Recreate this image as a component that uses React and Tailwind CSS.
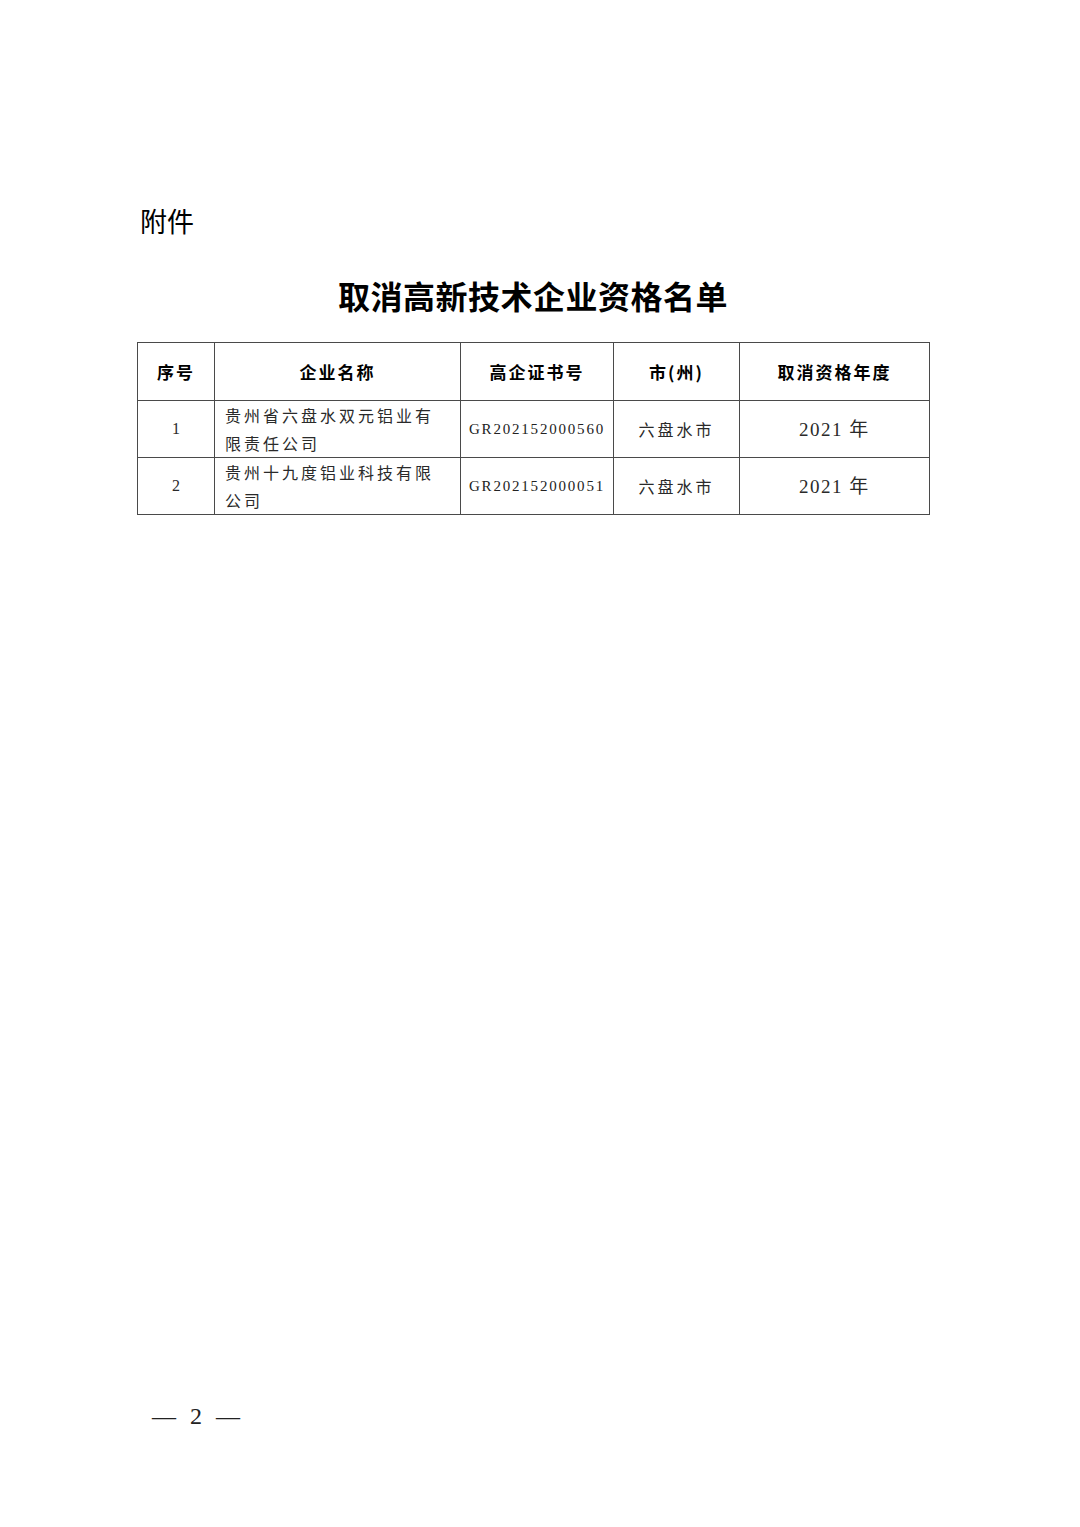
const rows = [
  {
    no: "1",
    name: ["贵州省六盘水双元铝业有", "限责任公司"],
    cert: "GR202152000560",
    city: "六盘水市",
    year: "2021",
  },
  {
    no: "2",
    name: ["贵州十九度铝业科技有限", "公司"],
    cert: "GR202152000051",
    city: "六盘水市",
    year: "2021",
  },
];

const cjkSans = { fontFamily: '"Noto Sans CJK SC", "Noto Sans", sans-serif' };
const serif = { fontFamily: '"Liberation Serif", "Noto Sans CJK SC", serif' };

export default function App() {
  return (
    <div className="flex h-[1527px] w-[1080px] flex-col bg-white text-[#1a1a1a]" style={cjkSans}>
      <div className="ml-[137px] w-[792px] pt-[203px]">
        {/* 附件 */}
        <div className="pl-[3px] text-[27px] leading-[36px] text-black">附件</div>

        {/* Title */}
        <h1 className="mt-[36px] text-center text-[32px] font-bold leading-[40px] tracking-[0.5px] text-black">
          取消高新技术企业资格名单
        </h1>

        {/* Table */}
        <table className="mt-[27px] w-[792px] table-fixed border-collapse border border-[#4a4a4a]">
          <colgroup>
            <col className="w-[77px]" />
            <col className="w-[246px]" />
            <col className="w-[153px]" />
            <col className="w-[126px]" />
            <col className="w-[190px]" />
          </colgroup>
          <thead>
            <tr className="h-[58px] text-[17px] font-bold tracking-[2px] text-black">
              <th className="border border-[#4a4a4a] text-center font-bold">序号</th>
              <th className="border border-[#4a4a4a] text-center font-bold">企业名称</th>
              <th className="border border-[#4a4a4a] text-center font-bold">高企证书号</th>
              <th className="border border-[#4a4a4a] text-center font-bold">市(州)</th>
              <th className="border border-[#4a4a4a] text-center font-bold">取消资格年度</th>
            </tr>
          </thead>
          <tbody>
            {rows.map((r) => (
              <tr key={r.no} className="h-[57px] text-[#2a2a2a]">
                <td className="border border-[#4a4a4a] text-center text-[16px]" style={serif}>
                  {r.no}
                </td>
                <td className="border border-[#4a4a4a] px-[10px] text-[16px] leading-[28px] tracking-[3px]">
                  {r.name.map((line) => (
                    <div key={line} className="whitespace-nowrap">{line}</div>
                  ))}
                </td>
                <td
                  className="border border-[#4a4a4a] text-center text-[15px] tracking-[1.8px] text-[#222]"
                  style={serif}
                >
                  {r.cert}
                </td>
                <td className="border border-[#4a4a4a] text-center text-[16px] tracking-[3px]">
                  {r.city}
                </td>
                <td className="border border-[#4a4a4a] text-center text-[19px] tracking-[1.5px]" style={serif}>
                  {r.year} <span style={cjkSans}>年</span>
                </td>
              </tr>
            ))}
          </tbody>
        </table>
      </div>

      {/* Page number */}
      <div
        className="mt-auto flex items-center gap-[14px] pb-[96px] pl-[152px] text-[24px] leading-[30px] text-[#222]"
        style={serif}
      >
        <span>—</span>
        <span>2</span>
        <span>—</span>
      </div>
    </div>
  );
}
